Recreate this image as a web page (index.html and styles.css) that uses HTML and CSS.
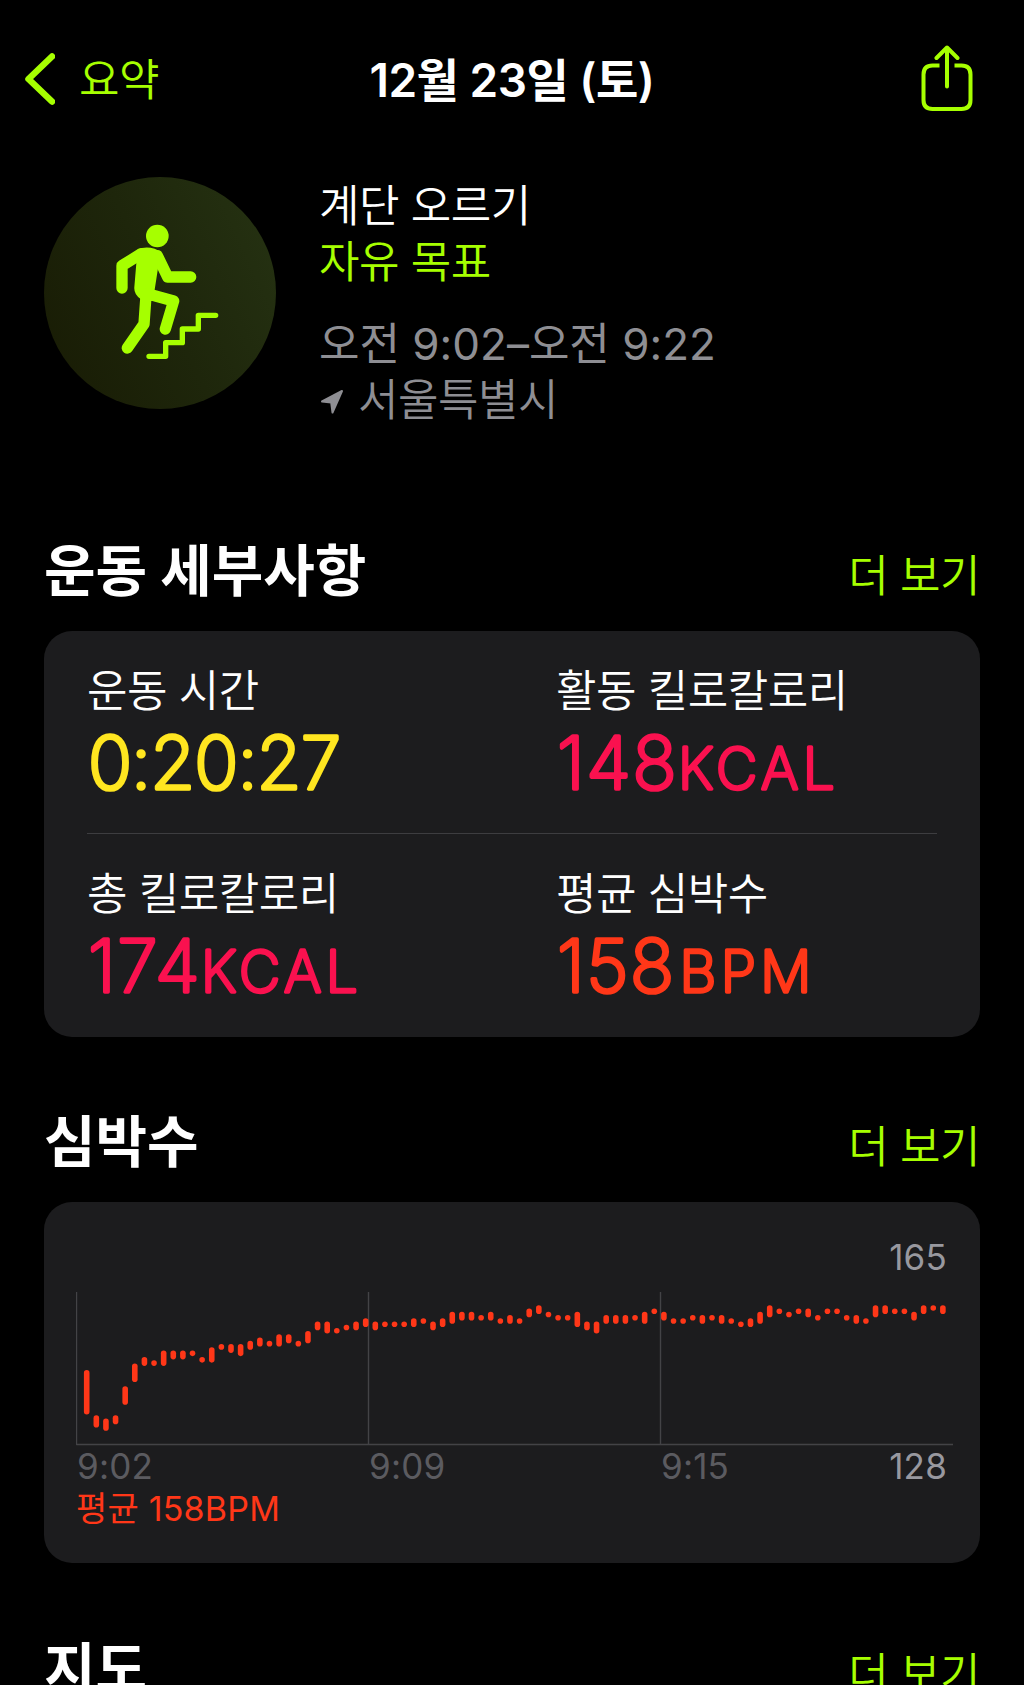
FILE: index.html
```html
<!DOCTYPE html>
<html lang="ko">
<head>
  <meta charset="UTF-8" />
  <meta name="viewport" content="width=device-width, initial-scale=1" />
  <title>12월 23일 (토)</title>
  <link rel="stylesheet" href="styles.css">
</head>
<body>
  <header class="navbar">
    <a class="back">
      <svg width="32" height="54" viewBox="0 0 32 54">
        <path d="M29 4.5 L5.5 27 L29 49.5" />
      </svg>
      <span>요약</span>
    </a>
    <h1>12월 23일 (토)</h1>
    <a class="share">
      <svg width="54" height="68" viewBox="0 0 54 68">
        <path d="M19.5 20.5 H12.5 Q3.5 20.5 3.5 29.5 V55 Q3.5 64 12.5 64 H41.5 Q50.5 64 50.5 55 V29.5 Q50.5 20.5 41.5 20.5 H34.5" />
        <path class="arrow" d="M27 41.5 V2.5 M16.5 13 L27 2.5 L37.5 13" />
      </svg>
    </a>
  </header>

  <section class="summary">
    <div class="badge">
      <svg width="232" height="232" viewBox="42 38 696 696">
        <circle cx="382" cy="215" r="34" class="fill" />
        <path class="fill" d="M322 256 Q345 244 374 253 Q393 260 401 279 L384 312 L374 376 L368 404 L332 404 Q311 390 313 368 L319 297 Z" />
        <path class="limb" d="M334 268 L276 304 V371 M382 274 L413 338 H482 M348 394 L342 479 L292 551 M352 388 L431 410 L406 494" />
        <path class="stairs" d="M357 576 H407 V535 H457 V494 H505 V453 H557" />
      </svg>
    </div>
    <div class="info">
      <p>계단 오르기</p>
      <p class="goal">자유 목표</p>
      <p class="time">오전 9:02–오전 9:22</p>
      <p class="place">
        <svg width="24" height="26" viewBox="0 0 24 26">
          <path d="M2 12.5 L22 2 L12.5 23.5 L11.2 13.6 Z" />
        </svg>
        <span>서울특별시</span>
      </p>
    </div>
  </section>

  <section>
    <div class="section-head">
      <h2>운동 세부사항</h2>
      <a>더 보기</a>
    </div>
    <div class="card metrics">
      <div class="metric-row">
        <div class="metric">
          <p>운동 시간</p>
          <svg class="value duration"><text x="1" y="69">0:20:27</text></svg>
        </div>
        <div class="metric">
          <p>활동 킬로칼로리</p>
          <svg class="value energy"><text x="1" y="69">148<tspan class="unit">KCAL</tspan></text></svg>
        </div>
      </div>
      <div class="metric-row">
        <div class="metric">
          <p>총 킬로칼로리</p>
          <svg class="value energy"><text x="1" y="69">174<tspan class="unit">KCAL</tspan></text></svg>
        </div>
        <div class="metric">
          <p>평균 심박수</p>
          <svg class="value pulse"><text x="1" y="69">158<tspan class="unit" dx="4">BPM</tspan></text></svg>
        </div>
      </div>
    </div>
  </section>

  <section>
    <div class="section-head">
      <h2>심박수</h2>
      <a>더 보기</a>
    </div>
    <div class="card heart">
      <div class="max">165</div>
      <svg class="chart" id="chart" width="878" height="154" viewBox="0 0 878 154">
        <path class="axis" d="M0.5 0 V152.5 H877 M292.5 0 V152 M584.5 0 V152" />
      </svg>
      <div class="ticks">
        <span>9:02</span>
        <span>9:09</span>
        <span>9:15</span>
        <span class="min">128</span>
      </div>
      <p class="average">평균 158BPM</p>
    </div>
  </section>

  <section>
    <div class="section-head">
      <h2>지도</h2>
      <a>더 보기</a>
    </div>
  </section>

  <script>
    // [min, max] bpm
    const samples = [
      [133, 145], [129, 131], [128, 130], [130, 131], [136, 140], [143, 147],
      [148, 149], [148, 148], [148, 151], [150, 151], [150, 151], [151, 151],
      [149, 149], [149, 152], [153, 153], [152, 153], [151, 153], [153, 154],
      [154, 155], [154, 154], [154, 156], [155, 156], [154, 154], [155, 157],
      [159, 160], [158, 160], [158, 158], [159, 159], [159, 160], [160, 161],
      [159, 160], [160, 160], [160, 160], [160, 160], [160, 161], [161, 161],
      [159, 160], [160, 161], [161, 163], [162, 163], [162, 163], [162, 162],
      [162, 163], [161, 161], [161, 162], [161, 161], [163, 164], [164, 165],
      [163, 163], [162, 162], [162, 162], [160, 163], [159, 160], [158, 160],
      [161, 162], [161, 162], [161, 162], [162, 162], [161, 163], [164, 164],
      [162, 163], [161, 161], [161, 161], [162, 162], [161, 162], [162, 162],
      [161, 162], [161, 161], [160, 160], [160, 161], [161, 163], [163, 165],
      [164, 164], [163, 163], [164, 164], [163, 164], [162, 162], [164, 164],
      [164, 164], [162, 162], [161, 162], [161, 161], [163, 165], [164, 165],
      [164, 164], [164, 164], [162, 163], [164, 165], [165, 165], [164, 165]
    ];

    const chart = document.getElementById('chart');
    const toY = bpm => 16 + (165 - bpm) * 3.24;

    samples.forEach(([min, max], i) => {
      const line = document.createElementNS('http://www.w3.org/2000/svg', 'line');
      const x = 10.7 + i * 9.62;
      line.setAttribute('class', 'beat');
      line.setAttribute('x1', x);
      line.setAttribute('x2', x);
      line.setAttribute('y1', toY(max));
      line.setAttribute('y2', toY(min));
      chart.appendChild(line);
    });
  </script>
</body>
</html>
```

FILE: styles.css
```css
html, body {
  height: 100%;
  margin: 0;
  padding: 0;
  overflow: hidden;
}

body {
  background: #000;
  color: #fff;
  font-family: Inter, "Noto Sans CJK KR", sans-serif;
  font-size: 44px;
  font-weight: 350;
  letter-spacing: -0.5px;
}

h1, h2, p {
  margin: 0;
}

svg {
  display: block;
  fill: none;
  stroke-linecap: round;
  stroke-linejoin: round;
}

.navbar {
  display: grid;
  grid-template-columns: 1fr auto 1fr;
  align-items: center;
  height: 158px;
  padding: 0 50px 0 23px;
  box-sizing: border-box;
}

.navbar h1 {
  margin: -4px -27px 0 0;
  font-size: 46px;
  font-weight: 600;
}

.back {
  display: flex;
  align-items: center;
  gap: 24px;
  color: #a6ff00;
}

.back svg {
  stroke: #a6ff00;
  stroke-width: 6.5;
}

.back span {
  margin-top: -4px;
}

.share {
  justify-self: end;
  margin-top: -1px;
}

.share svg {
  stroke: #a6ff00;
  stroke-width: 4;
  stroke-linecap: butt;
}

.share .arrow {
  stroke-linecap: round;
}

.summary {
  display: flex;
  gap: 43px;
  height: 361px;
  padding: 19px 44px 0;
}

.badge {
  width: 232px;
  height: 232px;
  border-radius: 50%;
  background: linear-gradient(65deg, #181b04, #1e260b 50%, #263313);
}

.badge .fill {
  fill: #a6ff00;
}

.badge .limb {
  stroke: #a6ff00;
  stroke-width: 34;
}

.badge .stairs {
  stroke: #a6ff00;
  stroke-width: 16;
}

.info {
  padding-top: 2px;
  line-height: 55.5px;
}

.goal {
  color: #a6ff00;
}

.time {
  margin-top: 27px;
  font-weight: 400;
  letter-spacing: 0;
}

.time, .place {
  color: #8e8e93;
}

.place {
  display: flex;
  align-items: center;
  gap: 14px;
}

.place svg {
  margin: 3px 0 0 1px;
  fill: #8e8e93;
  stroke: #8e8e93;
  stroke-width: 2;
}

.section-head {
  display: flex;
  justify-content: space-between;
  align-items: flex-start;
  height: 93px;
  padding: 0 44px;
  line-height: 68px;
}

.section-head h2 {
  margin-top: -1px;
  font-size: 56px;
  font-weight: 700;
  letter-spacing: 0;
}

.section-head a {
  margin-top: 4px;
  color: #a6ff00;
}

.card {
  margin: 0 44px 72px;
  border-radius: 28px;
  background: #1c1c1e;
  box-sizing: border-box;
}

.metrics {
  height: 406px;
  padding: 0 43px;
}

.metric-row {
  display: grid;
  grid-template-columns: 469px 1fr;
  height: 203px;
  padding-top: 32px;
  box-sizing: border-box;
}

.metric-row:first-child {
  border-bottom: 1px solid #3d3d40;
}

.metric p {
  line-height: 57px;
}

.value {
  width: 340px;
  height: 80px;
  overflow: visible;
  font-size: 73px;
  font-weight: 200;
  letter-spacing: 1.5px;
  stroke-width: 3.6;
}

.value .unit {
  font-size: 57px;
  letter-spacing: 4.4px;
}

.duration {
  fill: #ffe620;
  stroke: #ffe620;
  letter-spacing: -1px;
}

.energy {
  fill: #fa114f;
  stroke: #fa114f;
}

.pulse {
  fill: #ff3718;
  stroke: #ff3718;
}

.heart {
  height: 361px;
  padding: 35px 26px 0 32px;
  margin-bottom: 73px;
  font-size: 35px;
  font-weight: 400;
  letter-spacing: 0.2px;
  line-height: 40px;
}

.max {
  margin-right: 7px;
  color: #98989f;
  text-align: right;
}

.chart {
  margin-top: 15px;
}

.chart .axis {
  stroke: #434346;
  stroke-width: 1.4;
  stroke-linecap: butt;
}

.chart .beat {
  stroke: #ff3718;
  stroke-width: 5.6;
}

.ticks {
  display: grid;
  grid-template-columns: 292px 292px 1fr auto;
  padding: 0 7px 0 1px;
  color: #5b5b60;
}

.ticks .min {
  color: #98989f;
}

.average {
  margin-top: 3px;
  color: #ff3718;
  font-size: 34px;
}
```
